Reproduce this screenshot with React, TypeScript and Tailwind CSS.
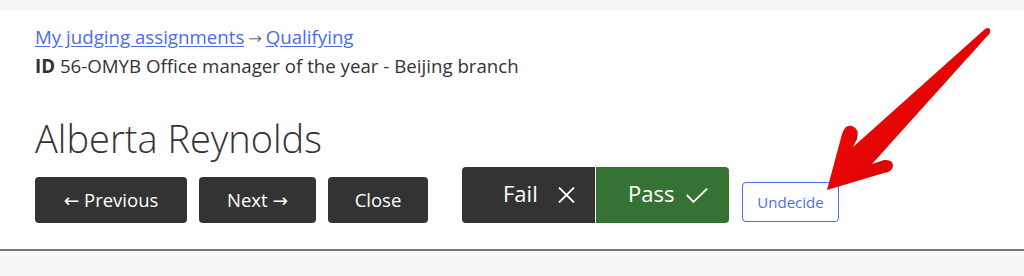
import React from "react";

function XIcon() {
  return (
    <svg width="17" height="16" viewBox="0 0 17 16" fill="none" stroke="currentColor" strokeWidth="1.8" strokeLinecap="butt">
      <path d="M1 0.5 L16 15.5 M16 0.5 L1 15.5" />
    </svg>
  );
}

function CheckIcon() {
  return (
    <svg width="22" height="15" viewBox="0 0 22 15" fill="none" stroke="currentColor" strokeWidth="1.8">
      <path d="M0.8 7 L7.5 13.8 L21.2 0.6" />
    </svg>
  );
}

export default function App() {
  const font = { fontFamily: '"Open Sans", "DejaVu Sans", sans-serif' };
  return (
    <div className="relative h-[276px] w-[1024px] bg-[#f8f8f8] text-[#333]" style={font}>
      <div className="h-[11px]" />
      <div className="bg-white border-b-2 border-[#777] px-[35px] pt-[12px] pb-[26px]">
        <div className="text-[18.7px] leading-[27px]">
          <a href="#" className="text-[#4a6cf0] underline underline-offset-2">My judging assignments</a>
          <span className="mx-[4px] text-[16px] font-light">→</span>
          <a href="#" className="text-[#4a6cf0] underline underline-offset-2">Qualifying</a>
        </div>
        <div className="text-[18.7px] leading-[27px]">
          <span className="font-bold">ID</span> 56-OMYB Office manager of the year - Beijing branch
        </div>
        <h1 className="mt-[37px] text-[38px] leading-[44px] font-light">Alberta Reynolds</h1>
        <div className="mt-[7px] flex items-end">
          <button className="h-[46px] w-[152px] rounded-[4px] bg-[#333] text-white text-[18.5px] flex items-center justify-center">
            ← Previous
          </button>
          <button className="ml-[12px] h-[46px] w-[117px] rounded-[4px] bg-[#333] text-white text-[18.5px] flex items-center justify-center">
            Next →
          </button>
          <button className="ml-[12px] h-[46px] w-[100px] rounded-[4px] bg-[#333] text-white text-[18.5px] flex items-center justify-center">
            Close
          </button>
          <div className="ml-[34px] flex h-[56px] rounded-[4px] overflow-hidden">
            <button className="w-[133px] bg-[#333] text-white text-[22px] flex items-center pl-[41px] gap-[20px] pb-[3px]">
              <span>Fail</span>
              <span className="pt-[3px]"><XIcon /></span>
            </button>
            <div className="w-[1px] bg-white" />
            <button className="w-[133px] bg-[#367234] text-white text-[22px] flex items-center pl-[32px] gap-[12px] pb-[3px]">
              <span>Pass</span>
              <span className="pt-[4px]"><CheckIcon /></span>
            </button>
          </div>
          <button className="ml-[13px] mb-[1px] h-[40px] w-[97px] rounded-[4px] border border-[#4a6cf0] bg-white text-[#4a6cf0] text-[15px] flex items-center justify-center">
            Undecide
          </button>
        </div>
      </div>
      <svg className="absolute left-0 top-0 pointer-events-none" width="1024" height="276" viewBox="0 0 1024 276">
        <defs>
          <linearGradient id="ag" x1="0" y1="0" x2="1" y2="1">
            <stop offset="0" stopColor="#ff0a0a" />
            <stop offset="1" stopColor="#cc0000" />
          </linearGradient>
        </defs>
        <path
          d="M827 190 L842 134 Q845 124 852 126 Q860 129 857 139 L853 147 L985 29 Q991 26 990 33 L872 164 L884 160 Q893 159 893 166 Q892 172 884 173 Z"
          fill="url(#ag)"
        />
      </svg>
    </div>
  );
}
